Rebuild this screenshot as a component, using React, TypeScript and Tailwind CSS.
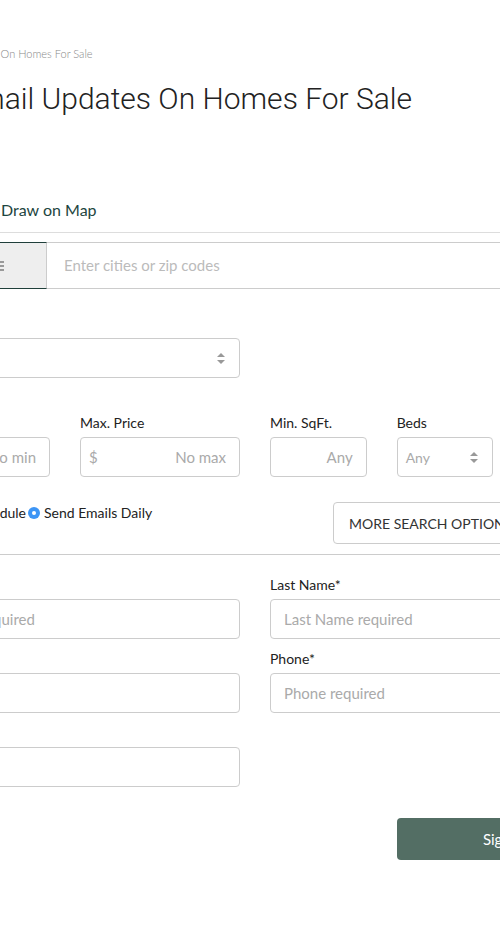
import { ChevronDown } from 'lucide-react';

const SelectArrows = () => (
  <svg width="8" height="11" viewBox="0 0 8 11" className="shrink-0">
    <path d="M4 0 L8 4 H0 Z" fill="#999" />
    <path d="M4 11 L8 7 H0 Z" fill="#999" />
  </svg>
);

const Label = ({ children }: { children: React.ReactNode }) => (
  <div className="text-[14px] leading-[20px] text-[#222] mb-[4px]">{children}</div>
);

const TextField = ({ placeholder, align = 'left', prefix }: { placeholder?: string; align?: 'left' | 'right'; prefix?: string }) => (
  <div className="h-[40px] border border-[#ccc] rounded-[4px] flex items-center px-[13px] text-[15px] text-[#aaa]">
    {prefix && <span className="text-[#aaa] -ml-[5px]">{prefix}</span>}
    <span className={align === 'right' ? 'ml-auto' : ''}>{placeholder}</span>
  </div>
);

const App = () => {
  return (
    <div className="w-[500px] h-[925px] overflow-hidden bg-white" style={{ fontFamily: 'Lato, "Open Sans", sans-serif' }}>
      <div className="-ml-[110px] w-[730px]">
        {/* Breadcrumb + title */}
        <div className="pt-[46px] pl-[40px] text-[11px] leading-[16px] font-light text-[#888]">
          Email Updates On Homes For Sale
        </div>
        <h1
          className="mt-[19px] pl-[71px] text-[30px] leading-[36px] font-light text-[#222] whitespace-nowrap"
          style={{ fontFamily: 'Roboto, sans-serif' }}
        >
          Email Updates On Homes For Sale
        </h1>

        {/* Tabs */}
        <div className="mt-[82px] flex border-b border-[#ddd] pb-[11px]">
          <div className="w-[111px] text-[16px] leading-[22px] text-[#1d4540]">Search</div>
          <div className="text-[16px] leading-[22px] text-[#1d4540]">Draw on Map</div>
        </div>

        {/* Location search */}
        <div className="mt-[9px] flex h-[47px]">
          <div className="w-[157px] bg-[#eee] border-y border-l border-[#1f3f3a] border-r border-r-[#ccc] flex items-center justify-end pr-[42px]">
            <svg width="13" height="10" viewBox="0 0 13 10">
              <rect x="0" y="0" width="13" height="2" fill="#999" />
              <rect x="0" y="4" width="13" height="2" fill="#999" />
              <rect x="0" y="8" width="13" height="2" fill="#999" />
            </svg>
          </div>
          <div className="flex-1 border-y border-r border-[#ccc] flex items-center pl-[17px] text-[15px] text-[#bbb]">
            Enter cities or zip codes
          </div>
        </div>

        {/* Property type */}
        <div className="mt-[49px] w-[350px] h-[40px] border border-[#ccc] rounded-[4px] flex items-center justify-end pr-[14px]">
          <SelectArrows />
        </div>

        {/* Price / size */}
        <div className="mt-[35px] grid grid-cols-2 gap-[30px]">
          <div className="grid grid-cols-2 gap-[30px]">
            <div>
              <Label>Min. Price</Label>
              <TextField prefix="$" placeholder="No min" align="right" />
            </div>
            <div>
              <Label>Max. Price</Label>
              <TextField prefix="$" placeholder="No max" align="right" />
            </div>
          </div>
          <div className="grid grid-cols-3 gap-[30px]">
            <div>
              <Label>Min. SqFt.</Label>
              <TextField placeholder="Any" align="right" />
            </div>
            <div>
              <Label>Beds</Label>
              <div className="h-[40px] border border-[#ccc] rounded-[4px] flex items-center justify-between pl-[8px] pr-[14px] text-[14px] text-[#aaa]">
                Any
                <SelectArrows />
              </div>
            </div>
            <div>
              <Label>Baths</Label>
              <div className="h-[40px] border border-[#ccc] rounded-[4px] flex items-center justify-between pl-[8px] pr-[14px] text-[14px] text-[#aaa]">
                Any
                <SelectArrows />
              </div>
            </div>
          </div>
        </div>

        {/* Email schedule + more options */}
        <div className="mt-[25px] grid grid-cols-2 gap-[30px] items-start">
          <div className="flex items-center text-[14px] leading-[20px] text-[#222] pt-[1px] whitespace-nowrap">
            <span className="w-[136px] text-right">Email Schedule</span>
            <span className="ml-[2px] mr-[4px] w-[12px] h-[12px] rounded-full bg-[#3d95f5] flex items-center justify-center">
              <span className="w-[4px] h-[4px] rounded-full bg-white" />
            </span>
            Send Emails Daily
          </div>
          <div className="pl-[63px]">
            <div className="h-[42px] border border-[#ccc] rounded-[4px] flex items-center px-[15px] text-[14px] text-[#333] whitespace-nowrap">
              MORE SEARCH OPTIONS
              <ChevronDown size={14} className="ml-2 text-[#666]" />
            </div>
          </div>
        </div>

        <div className="mt-[10px] border-t border-[#ccc]" />

        {/* Contact form */}
        <div className="mt-[20px] grid grid-cols-2 gap-x-[30px]">
          <div>
            <Label>First Name*</Label>
            <TextField placeholder="First Name required" />
          </div>
          <div>
            <Label>Last Name*</Label>
            <TextField placeholder="Last Name required" />
          </div>
          <div className="mt-[10px]">
            <Label>Email*</Label>
            <TextField placeholder="" />
          </div>
          <div className="mt-[10px]">
            <Label>Phone*</Label>
            <TextField placeholder="Phone required" />
          </div>
          <div className="mt-[10px]">
            <Label>Password*</Label>
            <TextField placeholder="" />
          </div>
        </div>

        <div className="mt-[31px] grid grid-cols-2 gap-x-[30px]">
          <div />
          <div className="grid grid-cols-3 gap-[30px]">
            <div />
            <button className="col-span-2 h-[42px] rounded-[4px] bg-[#536e64] text-white text-[15px]">
              Sign Up
            </button>
          </div>
        </div>
      </div>
    </div>
  );
};

export default App;
